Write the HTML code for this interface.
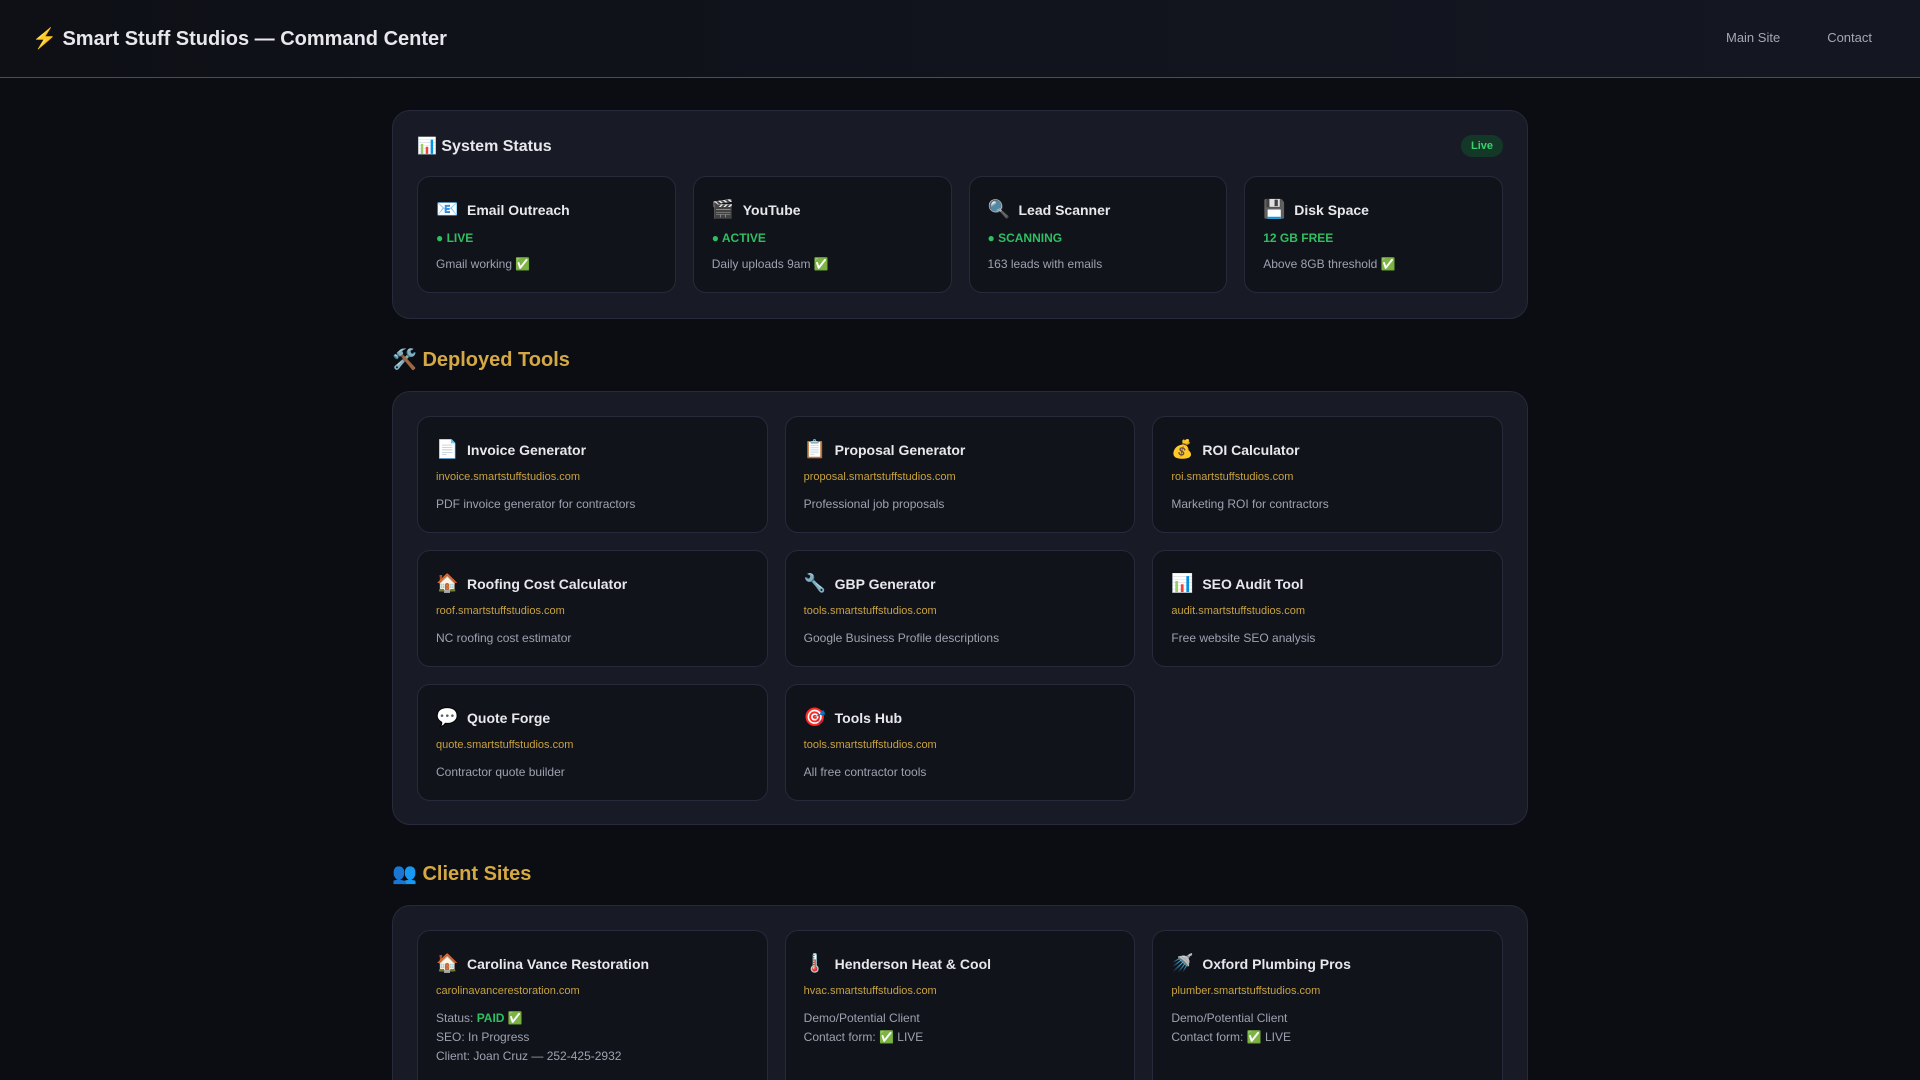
<!DOCTYPE html>
<html style="height:1080px;overflow:hidden"><head><meta charset="utf-8"><style>
*{box-sizing:border-box;margin:0;padding:0}
body{width:1920px;height:1080px;overflow:hidden;position:relative;background:#0c0d12;font-family:"Liberation Sans","Noto Sans CJK SC",sans-serif;color:#e8e8ec}
header{height:78px;border-bottom:1px solid #5a4e2e;background:linear-gradient(90deg,#0e1016,#141722);position:relative}
header h1{position:absolute;left:32px;top:26px;font-size:20px;font-weight:bold}
header nav{position:absolute;right:48px;top:30px;font-size:13px;color:#a4a8b4}
header nav span{margin-left:47px}
.wrap{position:absolute;left:392px;width:1136px}
.panel{background:#181b26;border:1px solid #262a3a;border-radius:18px;padding:24px}
.ptitle{font-size:16px;font-weight:bold;display:flex;justify-content:space-between;align-items:center;margin-bottom:19px}
.badge{background:#143828;color:#3ccf6e;font-size:11px;font-weight:bold;padding:5px 10px;border-radius:12px}
.grid4{display:grid;grid-template-columns:repeat(4,1fr);gap:17px}
.grid3{display:grid;grid-template-columns:repeat(3,1fr);gap:17px}
.card{background:#11131b;border:1px solid #262a3a;border-radius:13px;padding:22px 18px 0 18px;height:117px}
.card h3{font-size:14px;font-weight:bold;margin-bottom:11px;display:flex;align-items:center}
.card h3 i{font-style:normal;font-size:18px;margin-right:10px;width:21px}
.st{color:#2fbf62;font-size:12px;font-weight:bold;margin-bottom:10px}
.url{color:#c9a23f;font-size:11px;margin-bottom:12px}
.d{color:#9ea2b0;font-size:12px;line-height:19px}
.sec{font-size:20px;font-weight:bold;color:#d4a843;position:absolute}
</style></head><body>
<header><h1>⚡ Smart Stuff Studios — Command Center</h1><nav><span>Main Site</span><span>Contact</span></nav></header>
<div class="wrap panel" style="top:110px;height:209px">
<div class="ptitle"><span>📊 System Status</span><span class="badge">Live</span></div>
<div class="grid4">
<div class="card"><h3><i>📧</i>Email Outreach</h3><div class="st">● LIVE</div><div class="d">Gmail working ✅</div></div>
<div class="card"><h3><i>🎬</i>YouTube</h3><div class="st">● ACTIVE</div><div class="d">Daily uploads 9am ✅</div></div>
<div class="card"><h3><i>🔍</i>Lead Scanner</h3><div class="st">● SCANNING</div><div class="d">163 leads with emails</div></div>
<div class="card"><h3><i>💾</i>Disk Space</h3><div class="st">12 GB FREE</div><div class="d">Above 8GB threshold ✅</div></div>
</div></div>
<div class="sec" style="left:392px;top:347px">🛠️ Deployed Tools</div>
<div class="wrap panel" style="top:391px;height:434px">
<div class="grid3">
<div class="card"><h3><i>📄</i>Invoice Generator</h3><div class="url">invoice.smartstuffstudios.com</div><div class="d">PDF invoice generator for contractors</div></div>
<div class="card"><h3><i>📋</i>Proposal Generator</h3><div class="url">proposal.smartstuffstudios.com</div><div class="d">Professional job proposals</div></div>
<div class="card"><h3><i>💰</i>ROI Calculator</h3><div class="url">roi.smartstuffstudios.com</div><div class="d">Marketing ROI for contractors</div></div>
<div class="card"><h3><i>🏠</i>Roofing Cost Calculator</h3><div class="url">roof.smartstuffstudios.com</div><div class="d">NC roofing cost estimator</div></div>
<div class="card"><h3><i>🔧</i>GBP Generator</h3><div class="url">tools.smartstuffstudios.com</div><div class="d">Google Business Profile descriptions</div></div>
<div class="card"><h3><i>📊</i>SEO Audit Tool</h3><div class="url">audit.smartstuffstudios.com</div><div class="d">Free website SEO analysis</div></div>
<div class="card"><h3><i>💬</i>Quote Forge</h3><div class="url">quote.smartstuffstudios.com</div><div class="d">Contractor quote builder</div></div>
<div class="card"><h3><i>🎯</i>Tools Hub</h3><div class="url">tools.smartstuffstudios.com</div><div class="d">All free contractor tools</div></div>
</div></div>
<div class="sec" style="left:392px;top:861px">👥 Client Sites</div>
<div class="wrap panel" style="top:905px;height:175px;border-bottom:none;border-bottom-left-radius:0;border-bottom-right-radius:0">
<div class="grid3">
<div class="card" style="height:160px;border-bottom:none;border-bottom-left-radius:0;border-bottom-right-radius:0"><h3><i>🏠</i>Carolina Vance Restoration</h3><div class="url">carolinavancerestoration.com</div><div class="d">Status: <b style="color:#2fbf62">PAID</b> ✅<br>SEO: In Progress<br>Client: Joan Cruz — 252-425-2932</div></div>
<div class="card" style="height:160px;border-bottom:none;border-bottom-left-radius:0;border-bottom-right-radius:0"><h3><i>🌡️</i>Henderson Heat &amp; Cool</h3><div class="url">hvac.smartstuffstudios.com</div><div class="d">Demo/Potential Client<br>Contact form: ✅ LIVE</div></div>
<div class="card" style="height:160px;border-bottom:none;border-bottom-left-radius:0;border-bottom-right-radius:0"><h3><i>🚿</i>Oxford Plumbing Pros</h3><div class="url">plumber.smartstuffstudios.com</div><div class="d">Demo/Potential Client<br>Contact form: ✅ LIVE</div></div>
</div></div>
</body></html>
